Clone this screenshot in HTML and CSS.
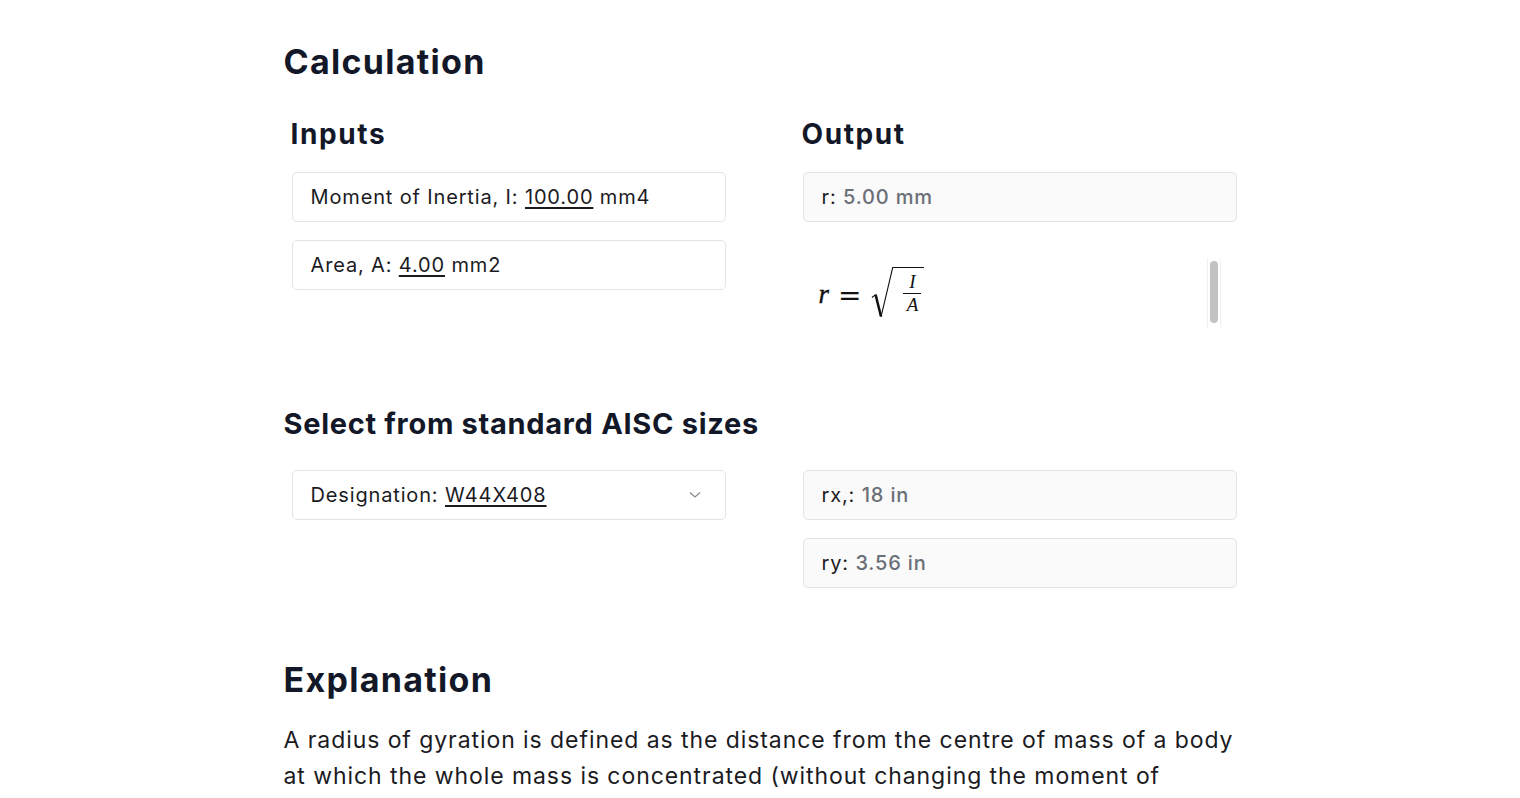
FILE: index.html
```html
<!DOCTYPE html>
<html lang="en">
<head>
<meta charset="utf-8">
<title>Radius of Gyration</title>
<link rel="stylesheet" href="styles.css">
</head>
<body>
<main class="page">
  <h1 class="title">Calculation</h1>
  <div class="calc-grid">
    <section class="col">
      <h2 class="subtitle">Inputs</h2>
      <div class="field">Moment of Inertia, I: <span class="val">100.00</span> mm4</div>
      <div class="field">Area, A: <span class="val">4.00</span> mm2</div>
    </section>
    <section class="col">
      <h2 class="subtitle">Output</h2>
      <div class="field out">r: <span class="res">5.00 mm</span></div>
      <div class="formula-row">
        <div class="formula">
          <span class="mi">r</span><span class="mo">=</span>
          <span class="sqrt">
            <svg class="surd" width="23" height="53" viewBox="0 0 23 53">
              <path d="M2 30.5 L5.6 27.6" stroke="#111" stroke-width="1.1" fill="none"/>
              <path d="M5.6 27.6 L11 49.5" stroke="#111" stroke-width="2.5" fill="none"/>
              <path d="M11 49.8 L22.7 0.6 L23 0.6" stroke="#111" stroke-width="1.1" fill="none"/>
            </svg>
            <span class="radicand">
              <span class="frac"><span class="num">I</span><span class="den">A</span></span>
            </span>
          </span>
        </div>
        <div class="scrollbar"><div class="thumb"></div></div>
      </div>
    </section>
  </div>

  <h2 class="section-title">Select from standard AISC sizes</h2>
  <div class="aisc-grid">
    <div class="col">
      <div class="field select">
        <span>Designation: <span class="val">W44X408</span></span>
        <svg class="chev" width="12" height="8" viewBox="0 0 12 8"><path d="M1 1.5 L6 6 L11 1.5" stroke="#8a8a8a" stroke-width="1.3" fill="none"/></svg>
      </div>
    </div>
    <div class="col">
      <div class="field out">rx,: <span class="res">18 in</span></div>
      <div class="field out">ry: <span class="res">3.56 in</span></div>
    </div>
  </div>

  <h1 class="title expl">Explanation</h1>
  <p class="body-text">A radius of gyration is defined as the distance from the centre of mass of a body at which the whole mass is concentrated (without changing the moment of inertia of the body about the axis of rotation).</p>
</main>
</body>
</html>
```
FILE: styles.css
```css
html, body {
  margin: 0;
  padding: 0;
  background: #ffffff;
  overflow: hidden;
}
body {
  font-family: Inter, "Noto Sans", sans-serif;
  color: #1b1b1f;
}
.page {
  width: 953px;
  margin: 0 auto;
  padding-top: 42px;
}
.title {
  margin: 0;
  font-size: 34px;
  line-height: 40px;
  font-weight: 700;
  color: #131829;
  letter-spacing: 1.3px;
}
.calc-grid, .aisc-grid {
  display: grid;
  grid-template-columns: 434px 434px;
  column-gap: 77px;
  padding-left: 8px;
  align-items: start;
}
.calc-grid { margin-top: 36px; }
.col {
  display: flex;
  flex-direction: column;
  gap: 18px;
}
.subtitle {
  margin: 0 0 4px -1px;
  font-size: 28px;
  line-height: 32px;
  font-weight: 700;
  color: #131829;
  letter-spacing: 1.6px;
}
.field {
  box-sizing: border-box;
  height: 50px;
  border: 1px solid #e3e4e8;
  border-radius: 5px;
  background: #ffffff;
  padding: 12px 18px;
  font-size: 20px;
  line-height: 24px;
  letter-spacing: 0.85px;
  color: #1b1b1f;
  white-space: nowrap;
}
.field.out {
  background: #fafafa;
}
.val {
  text-decoration: underline;
  text-decoration-thickness: 1.5px;
  text-underline-offset: 3px;
}
.res {
  color: #6b6f78;
  font-weight: 500;
}
.select {
  display: flex;
  align-items: center;
  justify-content: space-between;
  padding-right: 24px;
}
.chev { display: block; }

.formula-row {
  display: flex;
  align-items: center;
  justify-content: space-between;
  height: 70px;
  margin-top: 18px;
  margin-right: 16px;
  padding-left: 16px;
}
.formula {
  display: flex;
  align-items: center;
  color: #111;
}
.mi {
  font-family: "Liberation Serif", "DejaVu Serif", serif;
  font-style: italic;
  font-size: 27px;
  line-height: 26px;
  margin-top: 2px;
  -webkit-text-stroke: 0.4px #111;
}
.mo {
  font-family: "DejaVu Serif", "Liberation Serif", serif;
  font-size: 28px;
  line-height: 26px;
  margin: 6px 9px 0 9px;
}
.sqrt {
  display: flex;
  align-items: flex-start;
  height: 53px;
}
.surd { display: block; }
.radicand {
  box-sizing: border-box;
  width: 31px;
  height: 52px;
  border-top: 1.1px solid #111;
  display: flex;
  align-items: center;
  padding: 0 3px 0 10px;
}
.frac {
  display: flex;
  flex-direction: column;
  align-items: center;
  font-family: "Liberation Serif", "DejaVu Serif", serif;
  font-style: italic;
  font-size: 19px;
  line-height: 17px;
}
.num {
  padding: 0 2px 3px;
  border-bottom: 1px solid #111;
  min-width: 14px;
  text-align: center;
}
.den {
  padding-top: 2px;
}
.scrollbar {
  box-sizing: border-box;
  width: 14px;
  height: 70px;
  border-left: 1px solid #f1f1f1;
  border-right: 1px solid #f1f1f1;
  padding: 3px 2px 5px;
}
.thumb {
  width: 8px;
  height: 100%;
  border-radius: 4px;
  background: #c2c2c2;
}

.section-title {
  margin: 78px 0 0 0;
  font-size: 29px;
  line-height: 36px;
  font-weight: 700;
  color: #131829;
  letter-spacing: 0.7px;
}
.aisc-grid { margin-top: 28px; }

.expl { margin-top: 72px; }
.body-text {
  margin: 22px 0 0 0;
  font-size: 23px;
  line-height: 36px;
  letter-spacing: 0.93px;
  color: #1b1b1f;
}
```
